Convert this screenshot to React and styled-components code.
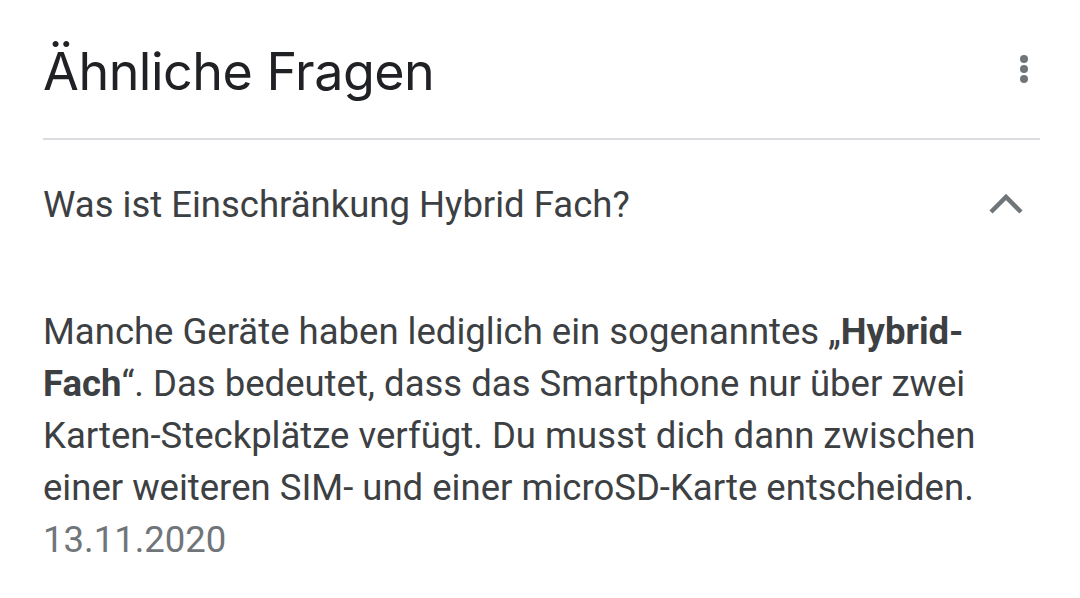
import React from 'react';
import styled, { createGlobalStyle } from 'styled-components';

const GlobalStyle = createGlobalStyle`
    html, body {
        margin: 0;
        padding: 0;
        background: #fff;
    }
    body {
        font-family: Roboto, "Liberation Sans", Arial, sans-serif;
    }
`;

const Page = styled.div`
    width: 1080px;
    height: 598px;
    box-sizing: border-box;
    padding: 0 40px 0 43px;
    background: #fff;
    overflow: hidden;
`;

const Header = styled.div`
    display: flex;
    align-items: center;
    justify-content: space-between;
    height: 138px;
    border-bottom: 2px solid #dadce0;
`;

const Title = styled.h2`
    margin: 4px 0 0;
    font-family: Inter, "Open Sans", sans-serif;
    font-weight: 400;
    font-size: 52px;
    letter-spacing: -0.5px;
    color: #202124;
`;

const IconButton = styled.button`
    display: flex;
    align-items: center;
    justify-content: center;
    width: ${p => p.$size || 40}px;
    height: 40px;
    padding: 0;
    margin-right: ${p => p.$offset || 0}px;
    border: 0;
    background: none;
    color: #70757a;
`;

const QuestionRow = styled.div`
    display: flex;
    align-items: center;
    justify-content: space-between;
    height: 128px;
`;

const Question = styled.div`
    font-size: 36.5px;
    color: #3c4043;
`;

const Answer = styled.div`
    padding-top: 38px;
    font-size: 36.5px;
    line-height: 52px;
    color: #3c4043;

    b {
        font-weight: 700;
        color: #3c4043;
    }
`;

const DateLine = styled.div`
    color: #70757a;
`;

function DotsIcon() {
    return (
        <svg width="10" height="30" viewBox="0 0 10 30">
            <circle cx="5" cy="5" r="4" fill="currentColor" />
            <circle cx="5" cy="15" r="4" fill="currentColor" />
            <circle cx="5" cy="25" r="4" fill="currentColor" />
        </svg>
    );
}

function ChevronUp() {
    return (
        <svg width="36" height="22" viewBox="0 0 36 22">
            <path d="M3 19 L18 4 L33 19" fill="none" stroke="currentColor" strokeWidth="4.5" />
        </svg>
    );
}

export default function App() {
    return (
        <Page>
            <GlobalStyle />
            <Header>
                <Title>Ähnliche Fragen</Title>
                <IconButton aria-label="Mehr Optionen" $offset={-4}>
                    <DotsIcon />
                </IconButton>
            </Header>
            <QuestionRow>
                <Question>Was ist Einschränkung Hybrid Fach?</Question>
                <IconButton aria-label="Zuklappen" $size={44} $offset={12}>
                    <ChevronUp />
                </IconButton>
            </QuestionRow>
            <Answer>
                Manche Geräte haben lediglich ein sogenanntes „<b>Hybrid-<br />Fach</b>“. Das bedeutet, dass das Smartphone nur über zwei Karten-Steckplätze verfügt. Du musst dich dann zwischen einer weiteren SIM- und einer microSD-Karte entscheiden.
                <DateLine>13.11.2020</DateLine>
            </Answer>
        </Page>
    );
}
